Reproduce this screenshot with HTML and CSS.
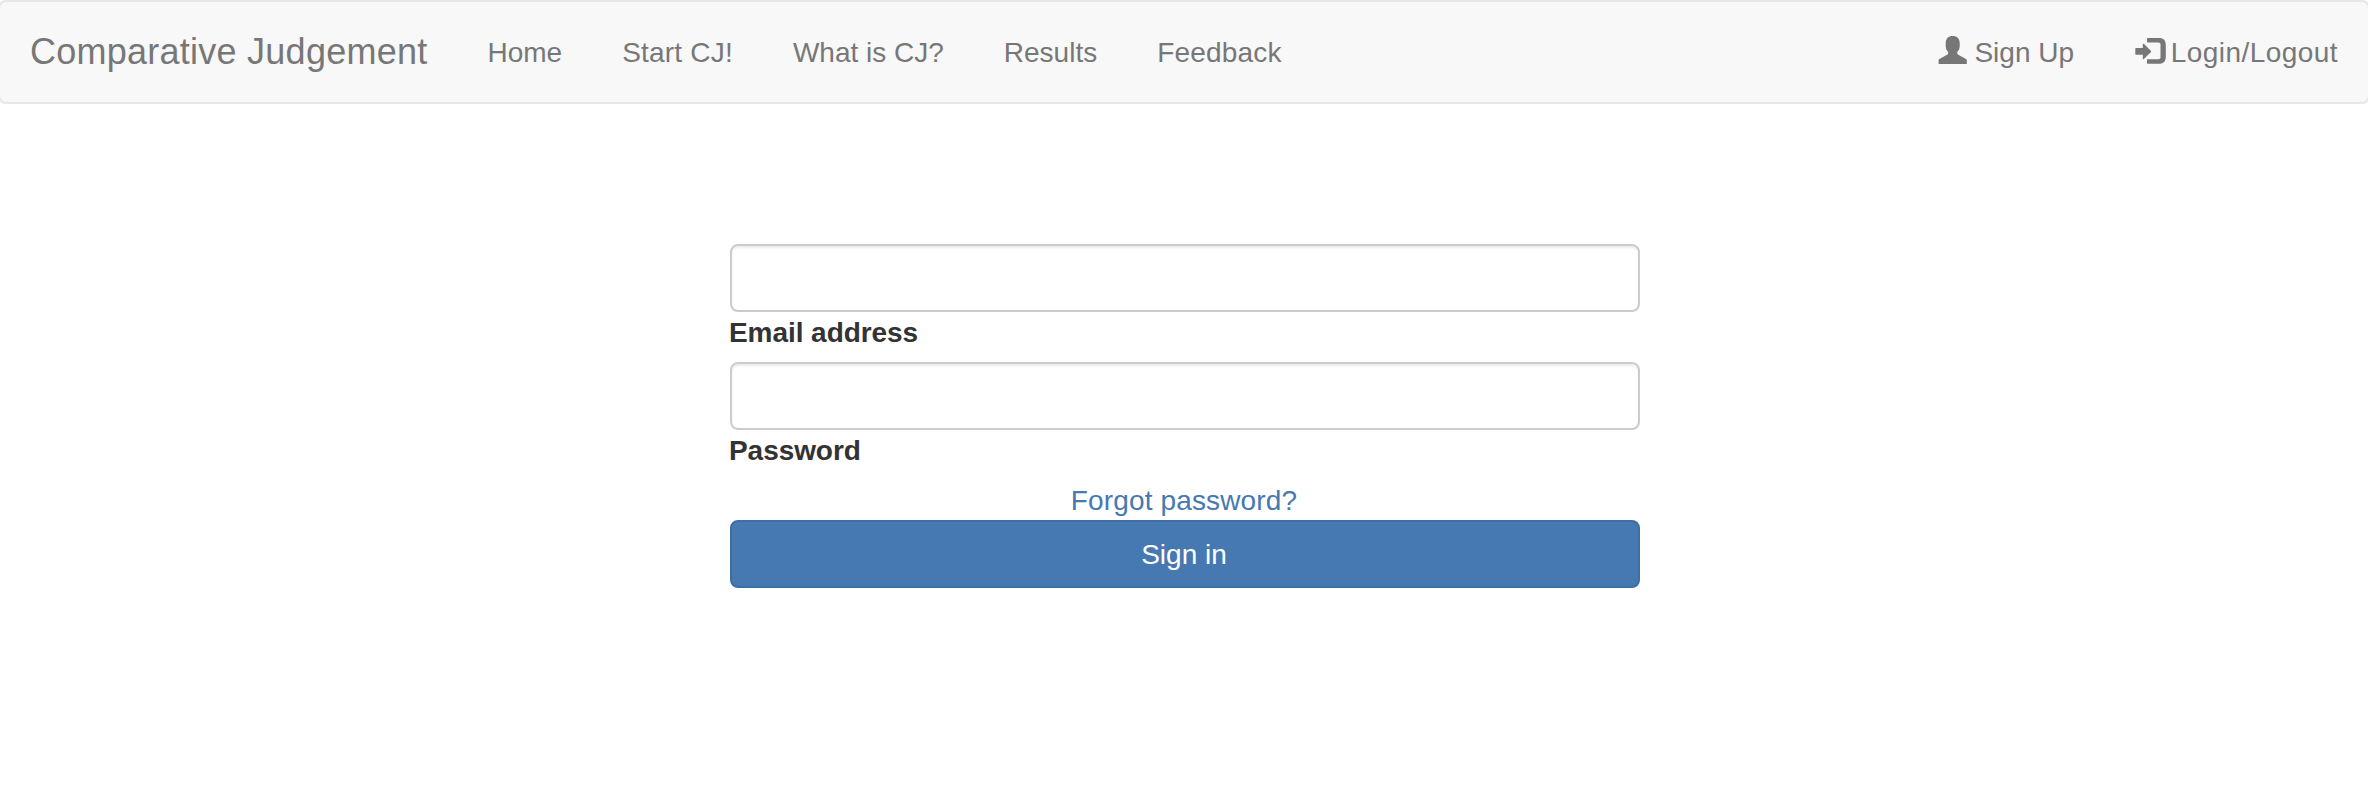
FILE: index.html
```html
<!DOCTYPE html>
<html lang="en">
<head>
<meta charset="utf-8">
<title>Comparative Judgement</title>
<link rel="stylesheet" href="styles.css">
</head>
<body>
<nav class="navbar">
  <a class="brand">Comparative Judgement</a>
  <ul class="nav">
    <li><a>Home</a></li>
    <li><a class="loose">Start CJ!</a></li>
    <li><a>What is CJ?</a></li>
    <li><a>Results</a></li>
    <li><a class="loose">Feedback</a></li>
  </ul>
  <ul class="nav nav-right">
    <li><a><svg class="icon" viewBox="0 0 30 30"><path d="M7.700 8C7.700 3.500 10.500 1 14.700 1S21.700 3.500 21.700 8v3c0 2.700-.9 4.500-2.400 5.800v1.700c0 .5.2.8.6 1l7.600 4.300c.9.500 1.300.9 1.300 1.800V29H.6v-3.400c0-.9.4-1.300 1.300-1.800l7.600-4.300c.4-.2.6-.5.6-1v-1.700C8.600 15.500 7.700 13.700 7.700 11z"/></svg><span>Sign Up</span></a></li>
    <li><a><svg class="icon icon-login" viewBox="0 0 32 30"><path d="M2.300 12.900h6.500V9.600c0-.9.600-1.100 1.300-.5l6.700 6.600c.5.500.5 1 0 1.500l-6.700 6.600c-.7.600-1.300.4-1.300-.5v-3.500H2.300c-.7 0-1-.3-1-1v-4.900c0-.7.3-1 1-1z"/><path d="M14 3h11c4.500 0 6.800 2.400 6.800 7v11.700c0 4.600-2.300 7-6.800 7H14c-.7 0-1-.3-1-1v-2.500c0-.7.3-1 1-1h10.500c1.300 0 2-.7 2-2V9.500c0-1.300-.7-2-2-2H14c-.7 0-1-.3-1-1V4c0-.7.3-1 1-1z"/></svg><span class="login-text">Login/Logout</span></a></li>
  </ul>
</nav>
<form class="signin">
  <input class="field" type="email" id="email">
  <label class="label" for="email">Email address</label>
  <input class="field" type="password" id="password">
  <label class="label" for="password">Password</label>
  <a class="forgot">Forgot password?</a>
  <button class="submit" type="button">Sign in</button>
</form>
</body>
</html>
```
FILE: styles.css
```css
* { box-sizing: border-box; }
body {
  margin: 0;
  overflow-x: hidden;
  background: #fff;
  color: #333;
  font: 28px/40px "Liberation Sans", Arial, sans-serif;
}
.navbar {
  display: flex;
  height: 104px;
  margin: 0 -2px;
  border: 2px solid #e7e7e7;
  border-radius: 8px;
  background: #f8f8f8;
  color: #777;
}
.brand {
  padding: 30px;
  font-size: 36px;
  letter-spacing: .25px;
  white-space: nowrap;
}
.nav {
  display: flex;
  margin: 0;
  padding: 0;
  list-style: none;
}
.nav-right { margin-left: auto; }
.nav a {
  display: flex;
  padding: 31px 30px 29px;
  white-space: nowrap;
}
.loose { letter-spacing: .2px; }
.icon {
  width: 30px;
  height: 30px;
  margin: 2px 6px 0 0;
  fill: currentColor;
}
.icon-login {
  width: 32px;
  margin-right: 4.6px;
}
.login-text { letter-spacing: .45px; }
.signin {
  display: flex;
  flex-direction: column;
  width: 910px;
  margin: 140px 0 0 730px;
}
.field {
  height: 68px;
  border: 2px solid #ccc;
  border-radius: 8px;
  background: #fff;
  box-shadow: inset 0 2px 2px rgba(0, 0, 0, .075);
  outline: 0;
}
.label {
  padding-top: 1px;
  margin: 0 0 9px -1px;
  font-weight: bold;
  letter-spacing: -.06px;
}
.forgot {
  padding: 1px 2px 0 0;
  margin-bottom: -1px;
  color: #4679b2;
  text-align: center;
  letter-spacing: .14px;
}
.submit {
  height: 68px;
  padding: 2px 2px 0 0;
  border: 2px solid #3f6ea3;
  border-radius: 8px;
  background: #4679b2;
  color: #fff;
  font: inherit;
}
```
